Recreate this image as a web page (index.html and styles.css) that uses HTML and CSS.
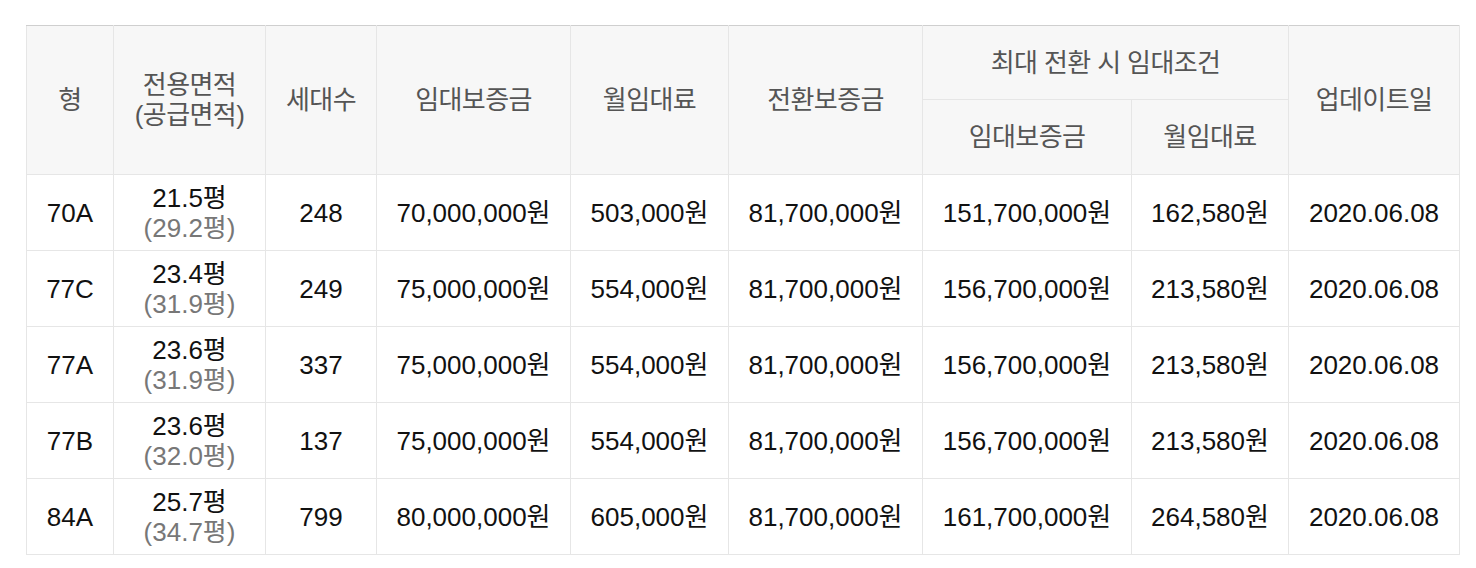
FILE: index.html
```html
<!DOCTYPE html>
<html lang="ko">
<head>
<meta charset="utf-8">
<link rel="stylesheet" href="styles.css">
</head>
<body>
<div class="wrap">
<table class="rent">
<colgroup>
<col class="c1"><col class="c2"><col class="c3"><col class="c4"><col class="c5"><col class="c6"><col class="c7"><col class="c8"><col class="c9">
</colgroup>
<thead>
<tr class="h1">
<th rowspan="2">형</th>
<th rowspan="2">전용면적<br>(공급면적)</th>
<th rowspan="2">세대수</th>
<th rowspan="2">임대보증금</th>
<th rowspan="2">월임대료</th>
<th rowspan="2">전환보증금</th>
<th colspan="2">최대 전환 시 임대조건</th>
<th rowspan="2">업데이트일</th>
</tr>
<tr class="h2">
<th>임대보증금</th>
<th>월임대료</th>
</tr>
</thead>
<tbody>
<tr><td>70A</td><td><span class="area">21.5평</span><span class="sup">(29.2평)</span></td><td>248</td><td>70,000,000원</td><td>503,000원</td><td>81,700,000원</td><td>151,700,000원</td><td>162,580원</td><td>2020.06.08</td></tr>
<tr><td>77C</td><td><span class="area">23.4평</span><span class="sup">(31.9평)</span></td><td>249</td><td>75,000,000원</td><td>554,000원</td><td>81,700,000원</td><td>156,700,000원</td><td>213,580원</td><td>2020.06.08</td></tr>
<tr><td>77A</td><td><span class="area">23.6평</span><span class="sup">(31.9평)</span></td><td>337</td><td>75,000,000원</td><td>554,000원</td><td>81,700,000원</td><td>156,700,000원</td><td>213,580원</td><td>2020.06.08</td></tr>
<tr><td>77B</td><td><span class="area">23.6평</span><span class="sup">(32.0평)</span></td><td>137</td><td>75,000,000원</td><td>554,000원</td><td>81,700,000원</td><td>156,700,000원</td><td>213,580원</td><td>2020.06.08</td></tr>
<tr><td>84A</td><td><span class="area">25.7평</span><span class="sup">(34.7평)</span></td><td>799</td><td>80,000,000원</td><td>605,000원</td><td>81,700,000원</td><td>161,700,000원</td><td>264,580원</td><td>2020.06.08</td></tr>
</tbody>
</table>
</div>
</body>
</html>
```

FILE: styles.css
```css
html, body {
  margin: 0;
  padding: 0;
  background: #ffffff;
}
body {
  font-family: "Liberation Sans", Arial, "Noto Sans CJK KR", sans-serif;
  font-size: 26px;
  color: #111111;
}
.wrap {
  padding: 25px 0 0 26px;
}
.rent {
  width: 1433px;
  border-collapse: collapse;
  table-layout: fixed;
  border-top: 1px solid #cfcfcf;
}
.c1 { width: 87px; }
.c2 { width: 152px; }
.c3 { width: 111px; }
.c4 { width: 194px; }
.c5 { width: 158px; }
.c6 { width: 194px; }
.c7 { width: 209px; }
.c8 { width: 157px; }
.c9 { width: 171px; }
.rent th, .rent td {
  border: 1px solid #e6e6e6;
  text-align: center;
  vertical-align: middle;
  padding: 0;
}
.rent th {
  background: #f7f7f7;
  color: #555555;
  font-weight: normal;
  line-height: 30px;
  letter-spacing: -0.6px;
}
.rent tr.h1 th[colspan] { height: 73px; }
.rent tr.h2 th { height: 74px; }
.rent td {
  height: 75px;
  line-height: 30px;
}
.area, .sup {
  display: block;
}
.sup {
  color: #777777;
}
.rent thead tr.h1 th { border-top-color: #cfcfcf; }
```
